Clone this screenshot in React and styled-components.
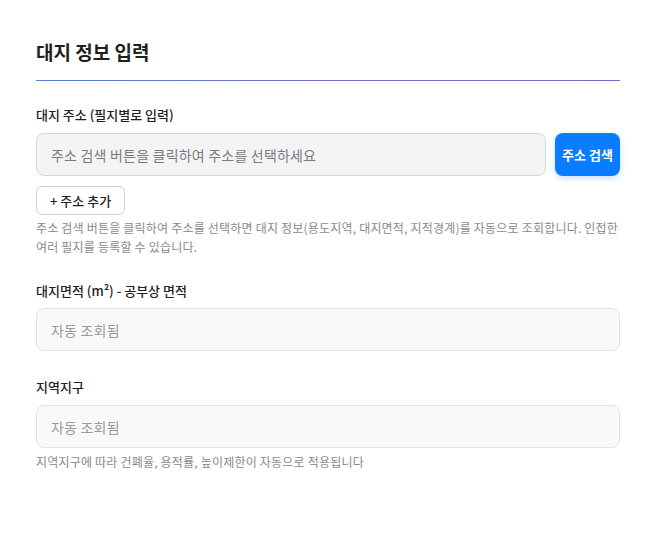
import React from 'react';
import styled, { createGlobalStyle } from 'styled-components';

const GlobalStyle = createGlobalStyle`
	body {
		margin: 0;
		background: #ffffff;
		font-family: 'Noto Sans CJK KR', 'Noto Sans', sans-serif;
		color: #222;
	}
`;

const Panel = styled.section`
	padding: 38px 37px 40px 36px;
`;

const Title = styled.h2`
	margin: 0;
	font-size: 19px;
	line-height: 28px;
	font-weight: 700;
	color: #1f1f1f;
`;

const Divider = styled.div`
	height: 1px;
	margin-top: 14px;
	background: linear-gradient(90deg, #5a80d6 0%, #8a62c8 100%);
`;

const Field = styled.div`
	margin-top: ${({ $gap }) => $gap}px;
`;

const Label = styled.label`
	display: block;
	font-size: 13px;
	line-height: 20px;
	font-weight: 500;
	color: #222;
	margin-bottom: ${({ $space }) => $space || 8}px;
`;

const Row = styled.div`
	display: flex;
	gap: 9px;
`;

const TextBox = styled.input`
	flex: 1;
	box-sizing: border-box;
	width: 100%;
	height: 43px;
	padding: 0 14px;
	border: 1px solid ${({ $muted }) => ($muted ? '#e2e3e6' : '#d6d7da')};
	border-radius: 8px;
	background: ${({ $muted }) => ($muted ? '#f8f9fa' : '#f3f4f6')};
	font-family: inherit;
	font-size: 14px;
	letter-spacing: 0.2px;
	outline: none;
	&::placeholder {
		color: ${({ $muted }) => ($muted ? '#9a9a9a' : '#7a7a7a')};
	}
`;

const SearchButton = styled.button`
	width: 65px;
	height: 43px;
	border: none;
	border-radius: 8px;
	background: #0a7cff;
	color: #fff;
	font-family: inherit;
	font-size: 13px;
	font-weight: 700;
	box-shadow: 0 2px 6px rgba(10, 124, 255, 0.25);
	cursor: pointer;
`;

const AddButton = styled.button`
	margin-top: 10px;
	height: 29px;
	padding: 0 13px;
	border: 1px solid #cfd0d3;
	border-radius: 6px;
	background: #fff;
	color: #222;
	font-family: inherit;
	font-size: 13px;
	font-weight: 500;
	cursor: pointer;
`;

const Help = styled.p`
	margin: ${({ $top }) => $top}px 0 0;
	font-size: 12px;
	line-height: 19px;
	color: #8a8a8a;
	word-break: keep-all;
	letter-spacing: 0.2px;
`;

export default function App() {
	return (
		<>
			<GlobalStyle />
			<Panel>
				<Title>대지 정보 입력</Title>
				<Divider />

				<Field $gap={24}>
					<Label>대지 주소 (필지별로 입력)</Label>
					<Row>
						<TextBox readOnly placeholder="주소 검색 버튼을 클릭하여 주소를 선택하세요" />
						<SearchButton>주소 검색</SearchButton>
					</Row>
					<AddButton>+ 주소 추가</AddButton>
					<Help $top={3}>
						주소 검색 버튼을 클릭하여 주소를 선택하면 대지 정보(용도지역, 대지면적, 지적경계)를 자동으로 조회합니다. 인접한
						여러 필지를 등록할 수 있습니다.
					</Help>
				</Field>

				<Field $gap={25}>
					<Label $space={7}>대지면적 (m²) - 공부상 면적</Label>
					<TextBox $muted readOnly placeholder="자동 조회됨" />
				</Field>

				<Field $gap={26}>
					<Label $space={8}>지역지구</Label>
					<TextBox $muted readOnly placeholder="자동 조회됨" />
					<Help $top={4}>지역지구에 따라 건폐율, 용적률, 높이제한이 자동으로 적용됩니다</Help>
				</Field>
			</Panel>
		</>
	);
}
